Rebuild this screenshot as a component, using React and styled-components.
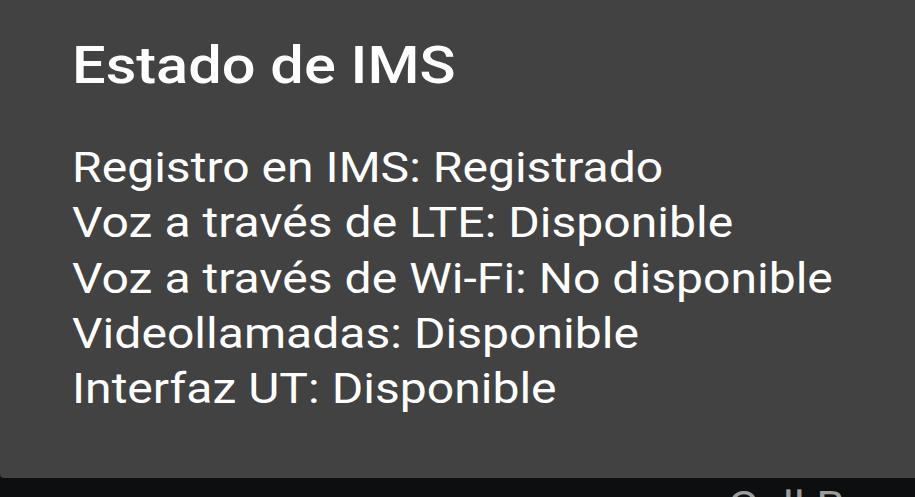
import React from 'react';
import styled, { createGlobalStyle } from 'styled-components';

const GlobalStyle = createGlobalStyle`
  html, body {
    margin: 0;
    padding: 0;
    background: #0c0e0f;
    overflow: hidden;
  }
  body {
    font-family: Roboto, "Noto Sans", "Liberation Sans", sans-serif;
    -webkit-font-smoothing: antialiased;
  }
`;

const Screen = styled.div`
  width: 915px;
  height: 497px;
  display: flex;
  flex-direction: column;
  overflow: hidden;
`;

const Dialog = styled.div`
  height: 478px;
  flex-shrink: 0;
  margin-right: -12px;
  box-sizing: border-box;
  padding: 36px 0 0 72px;
  background: #424242;
  border-radius: 0 0 4px 4px;
  color: #ffffff;
`;

const Content = styled.div`
  transform: scaleX(1.145);
  transform-origin: left top;
`;

const Title = styled.h1`
  margin: 0;
  font-size: 52px;
  font-weight: 500;
  line-height: 1.172;
  letter-spacing: 0;
`;

const StatusList = styled.div`
  margin-top: 43px;
  display: flex;
  flex-direction: column;
`;

const StatusLine = styled.div`
  font-size: 42px;
  font-weight: 400;
  line-height: 55.3px;
  white-space: nowrap;
`;

const Behind = styled.div`
  padding: 6px 0 0 728px;
  font-size: 40px;
  line-height: 1.172;
  color: #9c9c9c;
  white-space: nowrap;
  transform: scaleX(1.145);
  transform-origin: 728px top;
`;

const status = [
  ['Registro en IMS', 'Registrado'],
  ['Voz a través de LTE', 'Disponible'],
  ['Voz a través de Wi-Fi', 'No disponible'],
  ['Videollamadas', 'Disponible'],
  ['Interfaz UT', 'Disponible'],
];

export default function App() {
  return (
    <>
      <GlobalStyle />
      <Screen>
        <Dialog>
          <Content>
            <Title>Estado de IMS</Title>
            <StatusList>
              {status.map(([label, value]) => (
                <StatusLine key={label}>
                  {label}: {value}
                </StatusLine>
              ))}
            </StatusList>
          </Content>
        </Dialog>
        <Behind>Call Barred</Behind>
      </Screen>
    </>
  );
}
